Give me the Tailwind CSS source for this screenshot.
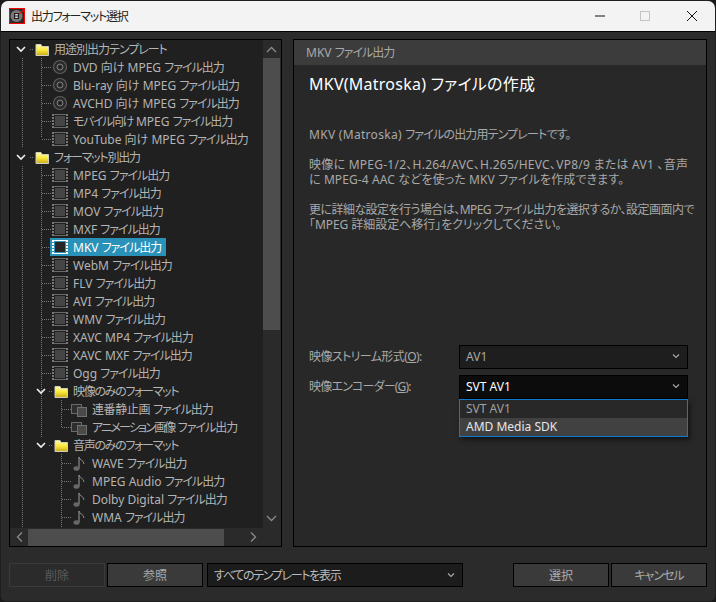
<!DOCTYPE html>
<html lang="ja">
<head>
<meta charset="UTF-8">
<title>出力フォーマット選択</title>
<script src="https://cdn.jsdelivr.net/npm/@tailwindcss/browser@4"></script>
</head>
<body class="w-[716px] h-[602px] overflow-hidden bg-[#1a1a1a] font-['Noto_Sans','Noto_Sans_CJK_JP',sans-serif] text-[12px] leading-[15px] [font-feature-settings:'palt'] text-[#b4b4b4]">

<svg width="0" height="0" class="absolute">
  <defs>
    <linearGradient id="fold" x1="0" y1="0" x2="0" y2="1"><stop offset="0" stop-color="#fffbb0"/><stop offset="0.5" stop-color="#fbe93c"/><stop offset="1" stop-color="#c9a91c"/></linearGradient>
    <symbol id="chev" viewBox="0 0 10 10"><path d="M1 3l4 4 4-4" fill="none" stroke="#f0f0f0" stroke-width="1.6"/></symbol>
    <symbol id="folder" viewBox="0 0 14 13">
      <path d="M1 12.5V1.5h5l1 2h6.5v9z" fill="url(#fold)" stroke="#cfcfc0"/>
    </symbol>
    <symbol id="disc" viewBox="0 0 16 16">
      <circle cx="8" cy="8" r="6.5" fill="#2a2a2a" stroke="#5e5e5e" stroke-width="1.2"/>
      <circle cx="8" cy="8" r="3" fill="#333" stroke="#7a7a7a"/>
      <circle cx="8" cy="8" r="1" fill="#111"/>
    </symbol>
    <symbol id="film" viewBox="0 0 16 16">
      <g shape-rendering="crispEdges">
        <rect x="3" y="3" width="10" height="10" fill="#454545"/>
        <path d="M2 1.5h12M2 14.5h12" stroke="#6a6a6a"/>
        <path d="M1 1v14M15 1v14" stroke="#777" stroke-width="2" stroke-dasharray="2 1"/>
      </g>
    </symbol>
    <symbol id="film-on" viewBox="0 0 16 16">
      <g shape-rendering="crispEdges">
        <rect x="3" y="3" width="10" height="10" fill="#262626"/>
        <path d="M2 1.5h12M2 14.5h12" stroke="#fff"/>
        <path d="M1 1v14M15 1v14" stroke="#fff" stroke-width="2" stroke-dasharray="2 1"/>
      </g>
    </symbol>
    <symbol id="images" viewBox="0 0 16 16">
      <rect x="0.5" y="3.5" width="10" height="9" fill="#2e2e2e" stroke="#6a6a6a"/>
      <rect x="6.5" y="6.5" width="9" height="9" fill="#4a4a4a" stroke="#707070"/>
    </symbol>
    <symbol id="note" viewBox="0 0 16 16">
      <path d="M8 2v11" stroke="#8a8a8a" stroke-width="1.2"/>
      <path d="M8 2c0 3 5 3 5 7" fill="none" stroke="#8a8a8a"/>
      <ellipse cx="5.5" cy="13.5" rx="3" ry="2.2" fill="#686868"/>
    </symbol>
  </defs>
</svg>

<div class="w-[716px] h-[602px] flex flex-col border border-[#1f1f1f] rounded-t-lg rounded-b-md overflow-hidden bg-[#2b2b2b]">

  <!-- title bar -->
  <div class="h-[31px] shrink-0 flex items-center bg-[#f3f3f3] border-b border-black text-[#222] pl-[8px]">
    <svg class="w-4 h-4 shrink-0 -mt-[1px]" viewBox="0 0 16 16">
      <rect width="16" height="16" fill="#ff0000"/>
      <rect x="1" y="1" width="14" height="14" fill="#2b2b2b"/>
      <circle cx="7.5" cy="8" r="6" fill="#777"/>
      <rect x="5" y="5" width="5" height="6" fill="#222"/>
      <rect x="6.2" y="6" width="2.6" height="1.5" fill="#ddd"/>
      <rect x="6.2" y="8.5" width="2.6" height="1.5" fill="#ddd"/>
      <path d="M10 6l5-4" stroke="#e01010" stroke-width="1.5"/>
    </svg>
    <span class="ml-[6px] text-[12px] tracking-[-1.2px]">出力フォーマット選択</span>
    <div class="ml-auto flex items-center">
      <svg class="w-[46px] h-[30px]" viewBox="0 0 46 30"><path d="M18 15h10" stroke="#111" stroke-width="1.2"/></svg>
      <svg class="w-[46px] h-[30px]" viewBox="0 0 46 30"><rect x="17.5" y="10.5" width="9" height="9" fill="none" stroke="#c4c4c4"/></svg>
      <svg class="w-[46px] h-[30px]" viewBox="0 0 46 30"><path d="M18 10l10 10M28 10L18 20" stroke="#111" fill="none"/></svg>
    </div>
  </div>

  <!-- main panes -->
  <div class="flex pt-[7px] pl-[8px] gap-[11px]">

    <!-- tree -->
    <div class="w-[273px] h-[508px] shrink-0 border border-black bg-[#2b2b2b] grid grid-cols-[253px_17px] grid-rows-[488px_18px] pr-px">
      <div class="relative overflow-hidden bg-[#202020] whitespace-nowrap">
        <svg class="absolute left-0 top-0" width="253" height="488" stroke="#777" stroke-dasharray="1 1" shape-rendering="crispEdges">
          <path d="M12.5 18V108M12.5 126V488"/>
          <path d="M31.5 18V98M31.5 126V398"/>
          <path d="M51.5 360V387M51.5 414V488"/>
          <path d="M20 9h4M20 117h4M39 351h4M39 405h4"/>
          <path d="M32 27h10M32 45h10M32 63h10M32 81h10M32 99h10M32 135h10M32 153h10M32 171h10M32 189h10M32 207h10M32 225h10M32 243h10M32 261h10M32 279h10M32 297h10M32 315h10M32 333h10"/>
          <path d="M52 369h9M52 387h9M52 423h9M52 441h9M52 459h9M52 477h9"/>
        </svg>
        <div class="relative">
          <div class="flex items-center h-[18px] pl-[6px]"><svg class="w-[10px] h-[10px] mr-[9px]"><use href="#chev"/></svg><svg class="w-[14px] h-[13px] mr-[5px]"><use href="#folder"/></svg><span class="tracking-[-1px]">用途別出力テンプレート</span></div>
          <div class="flex items-center h-[18px] pl-[42px] gap-[5px]"><svg class="w-4 h-4"><use href="#disc"/></svg><span>DVD 向け MPEG <span class="tracking-[-1px]">ファイル出力</span></span></div>
          <div class="flex items-center h-[18px] pl-[42px] gap-[5px]"><svg class="w-4 h-4"><use href="#disc"/></svg><span>Blu-ray 向け MPEG <span class="tracking-[-1px]">ファイル出力</span></span></div>
          <div class="flex items-center h-[18px] pl-[42px] gap-[5px]"><svg class="w-4 h-4"><use href="#disc"/></svg><span>AVCHD 向け MPEG <span class="tracking-[-1px]">ファイル出力</span></span></div>
          <div class="flex items-center h-[18px] pl-[42px] gap-[5px]"><svg class="w-4 h-4"><use href="#film"/></svg><span><span class="tracking-[-1.4px]">モバイル向け</span> MPEG <span class="tracking-[-1px]">ファイル出力</span></span></div>
          <div class="flex items-center h-[18px] pl-[42px] gap-[5px]"><svg class="w-4 h-4"><use href="#film"/></svg><span>YouTube 向け MPEG <span class="tracking-[-1px]">ファイル出力</span></span></div>
          <div class="flex items-center h-[18px] pl-[6px]"><svg class="w-[10px] h-[10px] mr-[9px]"><use href="#chev"/></svg><svg class="w-[14px] h-[13px] mr-[5px]"><use href="#folder"/></svg><span class="tracking-[-1.2px]">フォーマット別出力</span></div>
          <div class="flex items-center h-[18px] pl-[42px] gap-[5px]"><svg class="w-4 h-4"><use href="#film"/></svg><span>MPEG <span class="tracking-[-1px]">ファイル出力</span></span></div>
          <div class="flex items-center h-[18px] pl-[42px] gap-[5px]"><svg class="w-4 h-4"><use href="#film"/></svg><span>MP4 <span class="tracking-[-1px]">ファイル出力</span></span></div>
          <div class="flex items-center h-[18px] pl-[42px] gap-[5px]"><svg class="w-4 h-4"><use href="#film"/></svg><span>MOV <span class="tracking-[-1px]">ファイル出力</span></span></div>
          <div class="flex items-center h-[18px] pl-[42px] gap-[5px]"><svg class="w-4 h-4"><use href="#film"/></svg><span>MXF <span class="tracking-[-1px]">ファイル出力</span></span></div>
          <div class="flex items-center h-[18px] pl-[40px]"><div class="flex items-center h-[18px] w-[116px] pl-[2px] gap-[5px] bg-[#2a92b8] text-white"><svg class="w-4 h-4"><use href="#film-on"/></svg><span>MKV <span class="tracking-[-1px]">ファイル出力</span></span></div></div>
          <div class="flex items-center h-[18px] pl-[42px] gap-[5px]"><svg class="w-4 h-4"><use href="#film"/></svg><span>WebM <span class="tracking-[-1px]">ファイル出力</span></span></div>
          <div class="flex items-center h-[18px] pl-[42px] gap-[5px]"><svg class="w-4 h-4"><use href="#film"/></svg><span>FLV <span class="tracking-[-1px]">ファイル出力</span></span></div>
          <div class="flex items-center h-[18px] pl-[42px] gap-[5px]"><svg class="w-4 h-4"><use href="#film"/></svg><span>AVI <span class="tracking-[-1px]">ファイル出力</span></span></div>
          <div class="flex items-center h-[18px] pl-[42px] gap-[5px]"><svg class="w-4 h-4"><use href="#film"/></svg><span>WMV <span class="tracking-[-1px]">ファイル出力</span></span></div>
          <div class="flex items-center h-[18px] pl-[42px] gap-[5px]"><svg class="w-4 h-4"><use href="#film"/></svg><span>XAVC MP4 <span class="tracking-[-1px]">ファイル出力</span></span></div>
          <div class="flex items-center h-[18px] pl-[42px] gap-[5px]"><svg class="w-4 h-4"><use href="#film"/></svg><span>XAVC MXF <span class="tracking-[-1px]">ファイル出力</span></span></div>
          <div class="flex items-center h-[18px] pl-[42px] gap-[5px]"><svg class="w-4 h-4"><use href="#film"/></svg><span>Ogg <span class="tracking-[-1px]">ファイル出力</span></span></div>
          <div class="flex items-center h-[18px] pl-[26px]"><svg class="w-[10px] h-[10px] mr-[8px]"><use href="#chev"/></svg><svg class="w-[14px] h-[13px] mr-[5px]"><use href="#folder"/></svg><span class="tracking-[-1.3px]">映像のみのフォーマット</span></div>
          <div class="flex items-center h-[18px] pl-[61px] gap-[5px]"><svg class="w-4 h-4"><use href="#images"/></svg><span><span class="tracking-[-0.4px]">連番静止画</span> <span class="tracking-[-1px]">ファイル出力</span></span></div>
          <div class="flex items-center h-[18px] pl-[61px] gap-[5px]"><svg class="w-4 h-4"><use href="#images"/></svg><span><span class="tracking-[-1.8px]">アニメーション画像</span> <span class="tracking-[-1px]">ファイル出力</span></span></div>
          <div class="flex items-center h-[18px] pl-[26px]"><svg class="w-[10px] h-[10px] mr-[8px]"><use href="#chev"/></svg><svg class="w-[14px] h-[13px] mr-[5px]"><use href="#folder"/></svg><span class="tracking-[-1.3px]">音声のみのフォーマット</span></div>
          <div class="flex items-center h-[18px] pl-[61px] gap-[5px]"><svg class="w-4 h-4"><use href="#note"/></svg><span>WAVE <span class="tracking-[-1px]">ファイル出力</span></span></div>
          <div class="flex items-center h-[18px] pl-[61px] gap-[5px]"><svg class="w-4 h-4"><use href="#note"/></svg><span>MPEG Audio <span class="tracking-[-1px]">ファイル出力</span></span></div>
          <div class="flex items-center h-[18px] pl-[61px] gap-[5px]"><svg class="w-4 h-4"><use href="#note"/></svg><span>Dolby Digital <span class="tracking-[-1px]">ファイル出力</span></span></div>
          <div class="flex items-center h-[18px] pl-[61px] gap-[5px]"><svg class="w-4 h-4"><use href="#note"/></svg><span>WMA <span class="tracking-[-1px]">ファイル出力</span></span></div>
        </div>
      </div>
      <!-- vertical scrollbar -->
      <div class="flex flex-col bg-[#2a2a2a]">
        <svg class="w-[17px] h-[18px] shrink-0" viewBox="0 0 17 18"><path d="M4 12l4.5-4.5L13 12" fill="none" stroke="#8a8a8a" stroke-width="1.3"/></svg>
        <div class="h-[272px] bg-[#4d4d4d]"></div>
        <svg class="w-[17px] h-[18px] mt-auto shrink-0" viewBox="0 0 17 18"><path d="M4 6l4.5 4.5L13 6" fill="none" stroke="#8a8a8a" stroke-width="1.3"/></svg>
      </div>
      <!-- horizontal scrollbar -->
      <div class="flex items-center bg-[#2a2a2a]">
        <svg class="w-[18px] h-[18px] shrink-0" viewBox="0 0 18 18"><path d="M12 4.5L7.5 9l4.5 4.5" fill="none" stroke="#8a8a8a" stroke-width="1.3"/></svg>
        <div class="w-[196px] h-[17px] bg-[#4d4d4d]"></div>
        <svg class="w-[18px] h-[18px] ml-auto shrink-0" viewBox="0 0 18 18"><path d="M6 4.5L10.5 9 6 13.5" fill="none" stroke="#8a8a8a" stroke-width="1.3"/></svg>
      </div>
      <div class="bg-[#2a2a2a]"></div>
    </div>

    <!-- detail pane -->
    <div class="relative w-[414px] h-[508px] shrink-0 border border-black bg-[#282828] flex flex-col">
      <div class="h-[25px] shrink-0 bg-[#3c3c3c] flex items-center pl-[12px] text-[#a8a8a8]"><span>MKV <span class="tracking-[-1px]">ファイル出力</span></span></div>
      <h1 class="ml-[15px] mt-[8px] text-[16px] leading-[22px] text-white tracking-[0.25px]">MKV(Matroska) ファイルの作成</h1>
      <div class="ml-[15px] mt-[32px] text-[#a8a8a8] whitespace-nowrap">
        <p class="tracking-[0.3px]">MKV (Matroska) <span class="tracking-[-0.85px]">ファイルの出力用テンプレートです。</span></p>
        <p class="mt-[15px] tracking-[0.25px]">映像に MPEG-1/2、H.264/AVC、H.265/HEVC、VP8/9 または AV1 、音声</p>
        <p class="tracking-[0.1px]">に MPEG-4 AAC などを使った MKV ファイルを作成できます。</p>
        <p class="mt-[15px] tracking-[-0.55px]">更に詳細な設定を行う場合は、MPEG ファイル出力を選択するか、設定画面内で</p>
        <p class="tracking-[-0.05px]">「MPEG 詳細設定へ移行」をクリックしてください。</p>
      </div>
      <div class="mt-[113px] ml-[15px] flex flex-col gap-[6px]">
        <div class="flex items-center h-[24px]">
          <span class="w-[150px] shrink-0 pb-[2px] text-[#a8a8a8] tracking-[-0.6px]">映像ストリーム形式(<u>O</u>):</span>
          <div class="w-[229px] h-[24px] flex items-center justify-between border border-black bg-[#1e1e1e] pl-[6px] pr-[7px] pb-[2px] text-[#a8a8a8]">
            <span>AV1</span>
            <svg class="w-[8px] h-[8px]" viewBox="0 0 8 8"><path d="M1 2.5l3 3 3-3" fill="none" stroke="#aaa" stroke-width="1.1"/></svg>
          </div>
        </div>
        <div class="flex items-center h-[24px]">
          <span class="w-[150px] shrink-0 pb-[2px] text-[#a8a8a8] tracking-[-0.8px]">映像エンコーダー(<u>G</u>):</span>
          <div class="relative w-[229px] h-[24px] flex items-center justify-between border border-black bg-[#0c0c0c] pl-[6px] pr-[7px] pb-[2px] text-white">
            <span>SVT AV1</span>
            <svg class="w-[8px] h-[8px]" viewBox="0 0 8 8"><path d="M1 2.5l3 3 3-3" fill="none" stroke="#aaa" stroke-width="1.1"/></svg>
            <!-- open dropdown -->
            <div class="absolute -left-px top-[23px] w-[229px] h-[38px] border border-[#0f7ad0] bg-[#282828] shadow-[2px_3px_5px_rgba(0,0,0,0.5)]">
              <div class="h-[18px] flex items-center pl-[6px] pb-[2px] text-[#a0a0a0]">SVT AV1</div>
              <div class="h-[18px] flex items-center pl-[6px] pb-[2px] bg-[#414141] text-[#e6e6e6]">AMD Media SDK</div>
            </div>
          </div>
        </div>
      </div>
    </div>
  </div>

  <!-- bottom buttons -->
  <div class="flex items-center mt-[16px] ml-[8px] h-[24px]">
    <div class="w-[96px] h-[24px] flex items-center justify-center border border-[#3a3a3a] bg-[#2b2b2b] text-[#5c5c5c]">削除</div>
    <div class="w-[96px] h-[24px] ml-[2px] flex items-center justify-center border border-black bg-[#3a3a3a] text-[#aaa]">参照</div>
    <div class="w-[256px] h-[24px] ml-[4px] flex items-center justify-between border border-black bg-[#1c1c1c] pl-[6px] pr-[7px] text-[#bcbcbc]">
      <span class="tracking-[-1.3px]">すべてのテンプレートを表示</span>
      <svg class="w-[8px] h-[8px]" viewBox="0 0 8 8"><path d="M1 2.5l3 3 3-3" fill="none" stroke="#aaa" stroke-width="1.1"/></svg>
    </div>
    <div class="w-[96px] h-[24px] ml-[50px] flex items-center justify-center border border-black bg-[#3a3a3a] text-[#aaa]">選択</div>
    <div class="w-[96px] h-[24px] ml-[2px] flex items-center justify-center border border-black bg-[#3a3a3a] text-[#aaa] tracking-[-1px]">キャンセル</div>
  </div>
</div>
</body>
</html>
